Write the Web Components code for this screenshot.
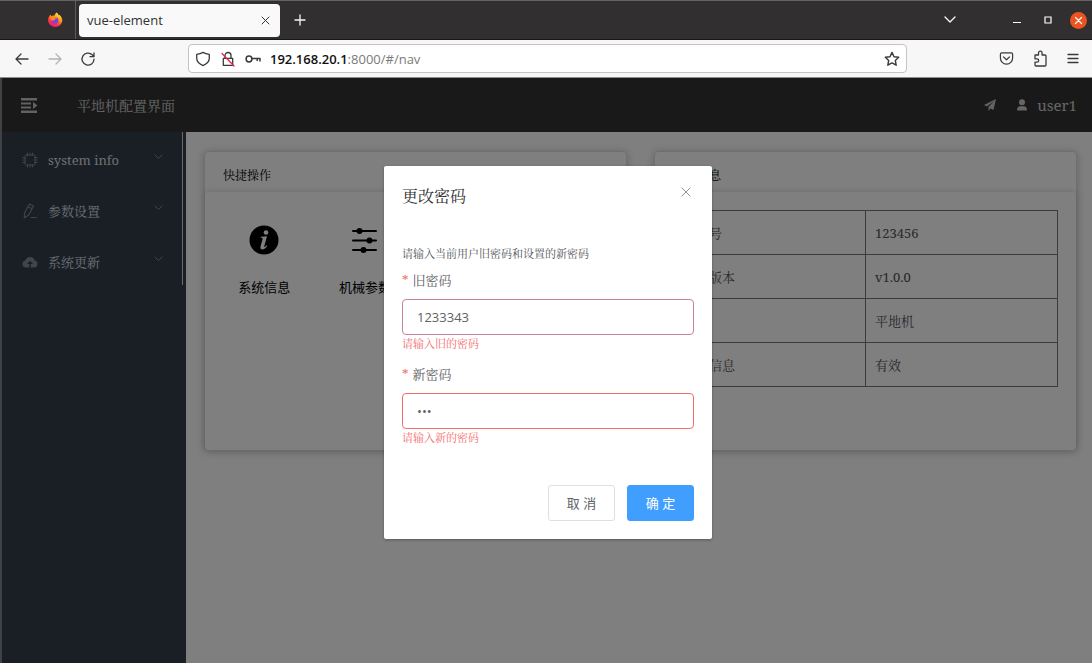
<!DOCTYPE html>
<html lang="zh-CN">
<head>
<meta charset="utf-8">
<title>vue-element</title>
<style>
html, body { margin: 0; height: 100%; }
body {
  font-family: "Noto Serif", "Liberation Serif", "Noto Serif CJK SC", "Noto Sans CJK SC", serif;
  --ui: "Open Sans", "Noto Sans", "Noto Sans CJK SC", sans-serif;
  overflow: hidden;
}
</style>
</head>
<body>
<browser-window>
  <span slot="tab">vue-element</span>
  <app-shell>
    <app-header slot="header" user="user1">平地机配置界面</app-header>
    <nav-item slot="nav" icon="chip">system info</nav-item>
    <nav-item slot="nav" icon="edit">参数设置</nav-item>
    <nav-item slot="nav" icon="cloud">系统更新</nav-item>
    <info-card>
      <span slot="title">快捷操作</span>
      <quick-grid>
        <quick-item icon="info">系统信息</quick-item>
        <quick-item icon="sliders">机械参数</quick-item>
      </quick-grid>
    </info-card>
    <info-card>
      <span slot="title">设备信息</span>
      <device-table></device-table>
    </info-card>
    <password-dialog slot="modal"></password-dialog>
  </app-shell>
</browser-window>

<script>
const define = (name, html, setup) => {
  const template = document.createElement('template');
  template.innerHTML = html;
  customElements.define(name, class extends HTMLElement {
    connectedCallback() {
      if (this.shadowRoot) return;
      const root = this.attachShadow({ mode: 'open' });
      root.append(template.content.cloneNode(true));
      if (setup) setup(this, root);
    }
  });
};

const stroke = 'fill="none" stroke="currentColor" stroke-linecap="round" stroke-linejoin="round"';
const icons = {
  back: `<svg width="16" height="16" viewBox="0 0 16 16" ${stroke} stroke-width="1.3"><path d="M14 8H2M7 3 2 8l5 5"/></svg>`,
  forward: `<svg width="16" height="16" viewBox="0 0 16 16" ${stroke} stroke-width="1.3"><path d="M2 8h12M9 3l5 5-5 5"/></svg>`,
  reload: `<svg width="16" height="16" viewBox="0 0 16 16" ${stroke} stroke-width="1.3"><path d="M14 8.200A6 6 0 1 1 12.200 3.800L13.800 5.400M14 1.800v3.900H10"/></svg>`,
  shield: `<svg width="16" height="16" viewBox="0 0 16 16" ${stroke} stroke-width="1.3"><path d="M8 1.400c2 1.300 3.700 1.700 6.300 1.900v3.800c0 3.700-2.600 6-6.300 7.500C4.300 13.100 1.700 10.800 1.700 7.100V3.300C4.300 3.100 6 2.700 8 1.400z"/></svg>`,
  lock: `<svg width="16" height="16" viewBox="0 0 16 16" ${stroke} stroke-width="1.3"><path d="M3.300 7.300h9.400v7H3.300zM5 7V4.500a3 3 0 0 1 6 0V7"/><path d="M2 2.500 14 15" stroke="#e22850" stroke-width="1.300"/></svg>`,
  key: `<svg width="16" height="16" viewBox="0 0 16 16" ${stroke} stroke-width="1.5"><circle cx="4" cy="8" r="2.900"/><path d="M7 7.500h8v2.500M12.200 7.500V9.500"/></svg>`,
  star: `<svg width="16" height="16" viewBox="0 0 16 16" ${stroke} stroke-width="1.4"><path d="m8 1.400 2 4.300 4.700.6-3.400 3.200.9 4.700L8 11.900l-4.200 2.300.9-4.700L1.300 6.300 6 5.700z"/></svg>`,
  pocket: `<svg width="15" height="15" viewBox="0 0 16 16" ${stroke} stroke-width="1.3"><path d="M3 2h10a1.500 1.500 0 0 1 1.500 1.500V7.500a6.500 6.500 0 0 1-13 0V3.500A1.500 1.500 0 0 1 3 2z"/><path d="m4.800 6.300 3.200 3.100 3.200-3.100"/></svg>`,
  puzzle: `<svg width="15" height="17" viewBox="0 0 15 17" ${stroke} stroke-width="1.3"><path d="M2 5h3.500V3a1.800 1.800 0 0 1 3.600 0v2H12a1 1 0 0 1 1 1v9a1 1 0 0 1-1 1H3a1 1 0 0 1-1-1v-2.800h2a1.700 1.700 0 0 0 0-3.400H2z"/></svg>`,
  menu: `<svg width="12" height="12" viewBox="0 0 12 12" ${stroke} stroke-width="1.3"><path d="M1 1.500h10M1 5.500h10M1 9.500h10"/></svg>`,
  firefox: `<svg width="16" height="16" viewBox="0 0 16 16"><defs><linearGradient id="flame" x1=".85" y1=".05" x2=".3" y2="1"><stop offset="0" stop-color="#fff44f"/><stop offset=".4" stop-color="#ff980e"/><stop offset=".7" stop-color="#ff3647"/><stop offset="1" stop-color="#e31587"/></linearGradient></defs><path fill="url(#flame)" d="M9.500.500c1.500 1 2 2 2.300 3l.5-.8c1.900 1.500 3 3.500 3 6A7.200 7.200 0 0 1 1 8.700c0-2.600 1-4.600 2.600-6.200l.7 1.700C5.400 3.500 6.500 3.400 7.500 3.800 7.800 2.500 8.500 1.300 9.500.500z"/><circle cx="8.200" cy="8.400" r="3.200" fill="#7542e5"/><path fill="#ff8a16" d="M3.500 5c1.700-.9 3.300-.2 4.600.3.800.3 1.500.1 2 .7-.8.800-2.500.6-2.500 2-1 .8-2.400 1-4.100-.5z"/></svg>`,
  chip: `<svg width="16" height="16" viewBox="0 0 16 16" ${stroke}><rect x="3" y="3" width="10" height="10" rx="1.500"/><path d="M5.500 1v2M8 1v2M10.500 1v2M5.500 13v2M8 13v2M10.500 13v2M1 5.500h2M1 8h2M1 10.500h2M13 5.500h2M13 8h2M13 10.500h2"/></svg>`,
  edit: `<svg width="16" height="16" viewBox="0 0 16 16" ${stroke} stroke-width="1.1"><path d="M7.500 1 11.500 3 6.500 12.200 2.300 14.800 2.500 10zM6.200 3.800l4 2M9 14.500h5.500"/></svg>`,
  cloud: `<svg width="16" height="16" viewBox="0 0 16 16"><path fill="currentColor" fill-rule="evenodd" d="M4 13.500A3.600 3.600 0 0 1 3.300 6.400 4.900 4.900 0 0 1 12.700 6.400 3.600 3.600 0 0 1 12 13.500H8.700V10H11L8 6.800 5 10H7.300v3.500z"/></svg>`,
  info: `<svg width="30" height="30" viewBox="0 0 30 30"><circle cx="15" cy="15" r="14.500" fill="#000"/><circle cx="17" cy="7.500" r="2.300" fill="#fff"/><path fill="#fff" d="M12 11.800 18 11.200 15.300 21c-.3 1.300.6 1.400 2.300-.7l.7.600c-3.800 5.200-7.700 3.900-6.800.5l2-7c.3-1.400-.3-1.700-1.800-1.700z"/></svg>`,
  sliders: `<svg width="30" height="30" viewBox="0 0 30 30"><g stroke="#000" stroke-width="2" stroke-linecap="round"><path d="M3 6h23M3 15.500h23M3 25h23"/></g><circle cx="9.500" cy="6" r="3" fill="#000"/><circle cx="19.500" cy="15.500" r="3" fill="#000"/><circle cx="13.500" cy="25" r="3" fill="#000"/></svg>`
};
const fillIcons = root => root.querySelectorAll('[data-icon]').forEach(el => { el.innerHTML = icons[el.dataset.icon]; });
const buttonReset = 'button{font:inherit;color:inherit;background:none;border:0;padding:0;margin:0;display:grid;place-items:center}svg{display:block}';

/* Browser frame: tab strip, toolbar and page viewport */
define('browser-window', `
<style>
${buttonReset}
:host { display: flex; flex-direction: column; height: 100vh; }
.tabs, .bar { font: 13px var(--ui); }
.tabs { display: flex; align-items: center; height: 38px; background: #322f30; color: #f5f5f5; border-top: 1px solid #646464; border-bottom: 1px solid #191717; }
.logo { width: 76px; height: 38px; box-sizing: border-box; padding-left: 47px; border-right: 1px solid #5c5a5a; display: flex; align-items: center; }
.tab { display: flex; align-items: center; justify-content: space-between; width: 201px; height: 33px; box-sizing: border-box; margin-left: 3px; padding: 0 10px 0 8px; background: #f9f9fa; color: #333; border-radius: 4px; }
.new { width: 40px; }
.grow { flex: 1; }
.list { margin-right: 55px; }
.win { display: flex; align-items: center; gap: 17px; padding-right: 5px; }
.pair { display: flex; gap: 21px; }
.close { width: 17px; height: 17px; border-radius: 50%; background: #e95420; }
.bar { display: flex; align-items: center; height: 37px; background: #f7f7f7; color: #3a3a3a; border-bottom: 1px solid #8d8d8d; }
.left { width: 188px; box-sizing: border-box; padding-left: 14px; display: flex; gap: 17px; }
.left button:nth-child(2) { color: #b4b4b4; }
.url { flex: 1; height: 29px; box-sizing: border-box; display: flex; align-items: center; gap: 9px; padding: 0 6px; background: #fff; border: 1px solid #c4c4c4; border-radius: 4px; }
.address { flex: 1; outline: none; color: #7b7b7b; white-space: nowrap; }
.address b { font-weight: 600; color: #111; }
.right { width: 185px; box-sizing: border-box; padding-right: 13px; display: flex; align-items: center; justify-content: flex-end; gap: 19px; }
.page { flex: 1; min-height: 0; display: flex; background: #7f7f7f; border-left: 2px solid #3f4144; }
::slotted(app-shell) { flex: 1; }
</style>
<div class="tabs">
  <div class="logo" data-icon="firefox"></div>
  <div class="tab"><slot name="tab"></slot><button aria-label="Close tab"><svg width="9" height="9" viewBox="0 0 9 9" ${stroke}><path d="m1 1 7 7M8 1 1 8"/></svg></button></div>
  <button class="new" aria-label="New tab"><svg width="12" height="12" viewBox="0 0 12 12" ${stroke} stroke-width="1.3"><path d="M6 1v10M1 6h10"/></svg></button>
  <div class="grow"></div>
  <button class="list" aria-label="List tabs"><svg width="14" height="8" viewBox="0 0 14 8" ${stroke} stroke-width="1.4"><path d="m2 1 5 5 5-5"/></svg></button>
  <div class="win">
    <div class="pair">
      <button aria-label="Minimize"><svg width="10" height="10" viewBox="0 0 10 10"><path d="M1 7h8v1H1z" fill="#fff"/></svg></button>
      <button aria-label="Maximize"><svg width="10" height="10" viewBox="0 0 10 10"><path d="M2 2h6v6H2z" fill="none" stroke="#fff" stroke-width="1.200"/></svg></button>
    </div>
    <button class="close" aria-label="Close window"><svg width="9" height="9" viewBox="0 0 9 9" ${stroke} stroke-width="1.3"><path d="m1.500 1.500 6 6M7.500 1.500l-6 6"/></svg></button>
  </div>
</div>
<div class="bar">
  <div class="left"><button aria-label="Back" data-icon="back"></button><button aria-label="Forward" data-icon="forward"></button><button aria-label="Reload" data-icon="reload"></button></div>
  <div class="url"><span data-icon="shield"></span><span data-icon="lock"></span><span data-icon="key"></span>
    <div class="address" role="textbox" aria-label="Address" contenteditable="true" spellcheck="false"><b>192.168.20.1</b>:8000/#/nav</div>
    <button aria-label="Bookmark" data-icon="star"></button></div>
  <div class="right"><button aria-label="Pocket" data-icon="pocket"></button><button aria-label="Extensions" data-icon="puzzle"></button><button aria-label="Menu" data-icon="menu"></button></div>
</div>
<div class="page"><slot></slot></div>`, (host, root) => fillIcons(root));

/* Page skeleton with the dimming layer on top */
define('app-shell', `
<style>
:host { display: flex; flex-direction: column; position: relative; min-width: 0; background: #fff; }
.body { flex: 1; display: flex; min-height: 0; }
nav { width: 184px; box-sizing: border-box; flex: none; padding-top: 2px; background: linear-gradient(#d8d8d8, #d8d8d8) 180px 0 / 1px 153px no-repeat #343f4c; }
main { flex: 1; display: grid; grid-template-columns: 1fr 1fr; gap: 27px; align-items: start; padding: 19px 15px 19px 18px; }
.mask { position: absolute; inset: 0; display: flex; justify-content: center; align-items: flex-start; padding-left: 2px; background: rgba(0,0,0,.5); }
</style>
<slot name="header"></slot>
<div class="body"><nav><slot name="nav"></slot></nav><main><slot></slot></main></div>
<div class="mask"><slot name="modal"></slot></div>`);

define('app-header', `
<style>
${buttonReset}
:host { display: flex; align-items: center; height: 54px; box-sizing: border-box; padding: 0 15px 0 18px; background: #333; color: #c4c4c4; font-size: 14px; }
h1 { flex: 1; margin: 0 0 0 39px; font-size: 14px; font-weight: 400; color: #ccc; }
.send { margin-right: 20px; }
.user { display: flex; align-items: center; gap: 9px; font-size: 15px; color: #ccc; }
</style>
<button aria-label="Toggle menu"><svg width="18" height="15" viewBox="0 0 18 15" fill="currentColor"><path d="M1 0h16v2.500H1zM1 4.500h10V6.500H1zM1 8.500h10v2H1zM1 12.500h16V15H1zM13 4l4.500 3.500L13 11z"/></svg></button>
<h1><slot></slot></h1>
<button class="send" aria-label="Send"><svg width="12" height="12" viewBox="0 0 12 12" fill="currentColor"><path d="M12 0 0 6l3 1.500L10 2 4.500 8v4l2-2.600L9.500 11z"/></svg></button>
<div class="user"><svg width="12" height="12" viewBox="0 0 12 12" fill="currentColor"><circle cx="6" cy="3.300" r="3"/><path d="M1 11.500c0-3 1.500-4.200 3-4.200h4c1.500 0 3 1.200 3 4.200z"/></svg><span id="name"></span></div>`,
(host, root) => { root.getElementById('name').textContent = host.getAttribute('user'); });

define('nav-item', `
<style>
${buttonReset}
:host { display: block; }
button { display: flex; align-items: center; width: 100%; height: 51px; padding: 0 23px 0 20px; font-size: 13px; color: #dcdfe4; text-align: left; }
#icon { margin-right: 10px; color: #858890; }
.label { flex: 1; line-height: 18px; }
.arrow { margin-bottom: 6px; color: #85888d; }
</style>
<button aria-expanded="false"><span id="icon"></span><span class="label"><slot></slot></span>
<svg class="arrow" width="9" height="6" viewBox="0 0 9 6" ${stroke}><path d="m1 1 3.500 3.500L8 1"/></svg></button>`,
(host, root) => { root.getElementById('icon').innerHTML = icons[host.getAttribute('icon')]; });

define('info-card', `
<style>
:host { display: flex; flex-direction: column; height: 300px; box-sizing: border-box; background: #fff; border: 1px solid #dcdfe6; border-radius: 4px; box-shadow: 0 1px 9px rgba(20,20,50,.25); }
h2 { margin: 0; padding: 0 18px; height: 40px; line-height: 48px; font-size: 12px; font-weight: 400; color: #000; }
.body { flex: 1; border-radius: 4px; box-shadow: 0 -1px 6px rgba(0,0,0,.13); }
</style>
<h2><slot name="title"></slot></h2><div class="body"><slot></slot></div>`);

define('quick-grid', `
<style>:host { display: grid; grid-template-columns: repeat(4, 1fr); padding: 33px 9px; }</style><slot></slot>`);

define('quick-item', `
<style>
${buttonReset}
:host { display: grid; justify-items: center; }
button { gap: 23px; font-size: 13px; line-height: 18px; color: #000; font-family: "Noto Sans CJK SC", sans-serif; white-space: nowrap; }
</style>
<button><span id="icon"></span><span><slot></slot></span></button>`,
(host, root) => { root.getElementById('icon').innerHTML = icons[host.getAttribute('icon')]; });

define('device-table', `
<style>
:host { display: block; padding: 18px; }
table { width: 100%; border-collapse: collapse; table-layout: fixed; font-size: 13px; color: #505256; }
td, th { height: 43px; padding: 0 9px; border: 1px solid #777; text-align: left; font-weight: 400; box-sizing: border-box; }
tr { height: 44px; }
</style>
<table><tbody>
<tr><th scope="row">设备号</th><td>123456</td></tr>
<tr><th scope="row">软件版本</th><td>v1.0.0</td></tr>
<tr><th scope="row">类型</th><td>平地机</td></tr>
<tr><th scope="row">授权信息</th><td>有效</td></tr>
</tbody></table>`);

define('form-field', `
<style>
:host { display: block; }
label { display: block; padding-bottom: 2px; line-height: 34px; font-size: 13px; color: #606266; }
label::before { content: "*"; margin-right: 4px; color: #f56c6c; }
input { display: block; width: 100%; height: 36px; box-sizing: border-box; margin: 0; padding: 0 14px; border: 1px solid var(--edge, #f56c6c); border-radius: 4px; background: #fff; color: #606266; font: 13px var(--ui); outline: none; }
p { margin: 0; font-size: 11px; line-height: 18px; color: #f56c6c; }
</style>
<label for="field"><slot></slot></label><input id="field" aria-describedby="error"><p id="error"></p>`,
(host, root) => {
  const input = root.getElementById('field');
  input.type = host.getAttribute('type') || 'text';
  input.value = host.getAttribute('value');
  root.getElementById('error').textContent = host.getAttribute('error');
});

define('action-button', `
<style>
:host { display: block; }
button { height: 36px; width: 67px; padding: 0; border: 1px solid #dcdfe6; border-radius: 3px; background: #fff; color: #606266; font: 13px/18px var(--ui); }
:host([primary]) button { background: #409eff; border-color: #409eff; color: #fff; }
</style><button type="button"><slot></slot></button>`);

define('password-dialog', `
<style>
${buttonReset}
:host { display: block; width: 328px; max-width: 90%; box-sizing: border-box; margin-top: 88px; padding: 18px; background: #fff; border-radius: 2px; box-shadow: 0 1px 3px rgba(0,0,0,.3); }
header { display: flex; justify-content: space-between; align-items: flex-start; height: 61px; }
h2 { margin: 0; font-size: 16px; line-height: 24px; font-weight: 400; color: #303133; }
header button { padding: 3px; color: #909399; }
p { margin: 0; font-size: 11px; line-height: 18px; color: #505256; }
form-field + form-field { margin-top: 4px; }
footer { display: flex; justify-content: flex-end; gap: 12px; margin-top: 38px; }
</style>
<header><h2>更改密码</h2><button aria-label="Close"><svg width="10" height="10" viewBox="0 0 10 10" ${stroke}><path d="m1 1 8 8M9 1 1 9"/></svg></button></header>
<p>请输入当前用户旧密码和设置的新密码</p>
<form-field value="1233343" error="请输入旧的密码" style="--edge:#c5819e">旧密码</form-field>
<form-field type="password" value="123" error="请输入新的密码">新密码</form-field>
<footer><action-button>取 消</action-button><action-button primary>确 定</action-button></footer>`);
</script>
</body>
</html>
